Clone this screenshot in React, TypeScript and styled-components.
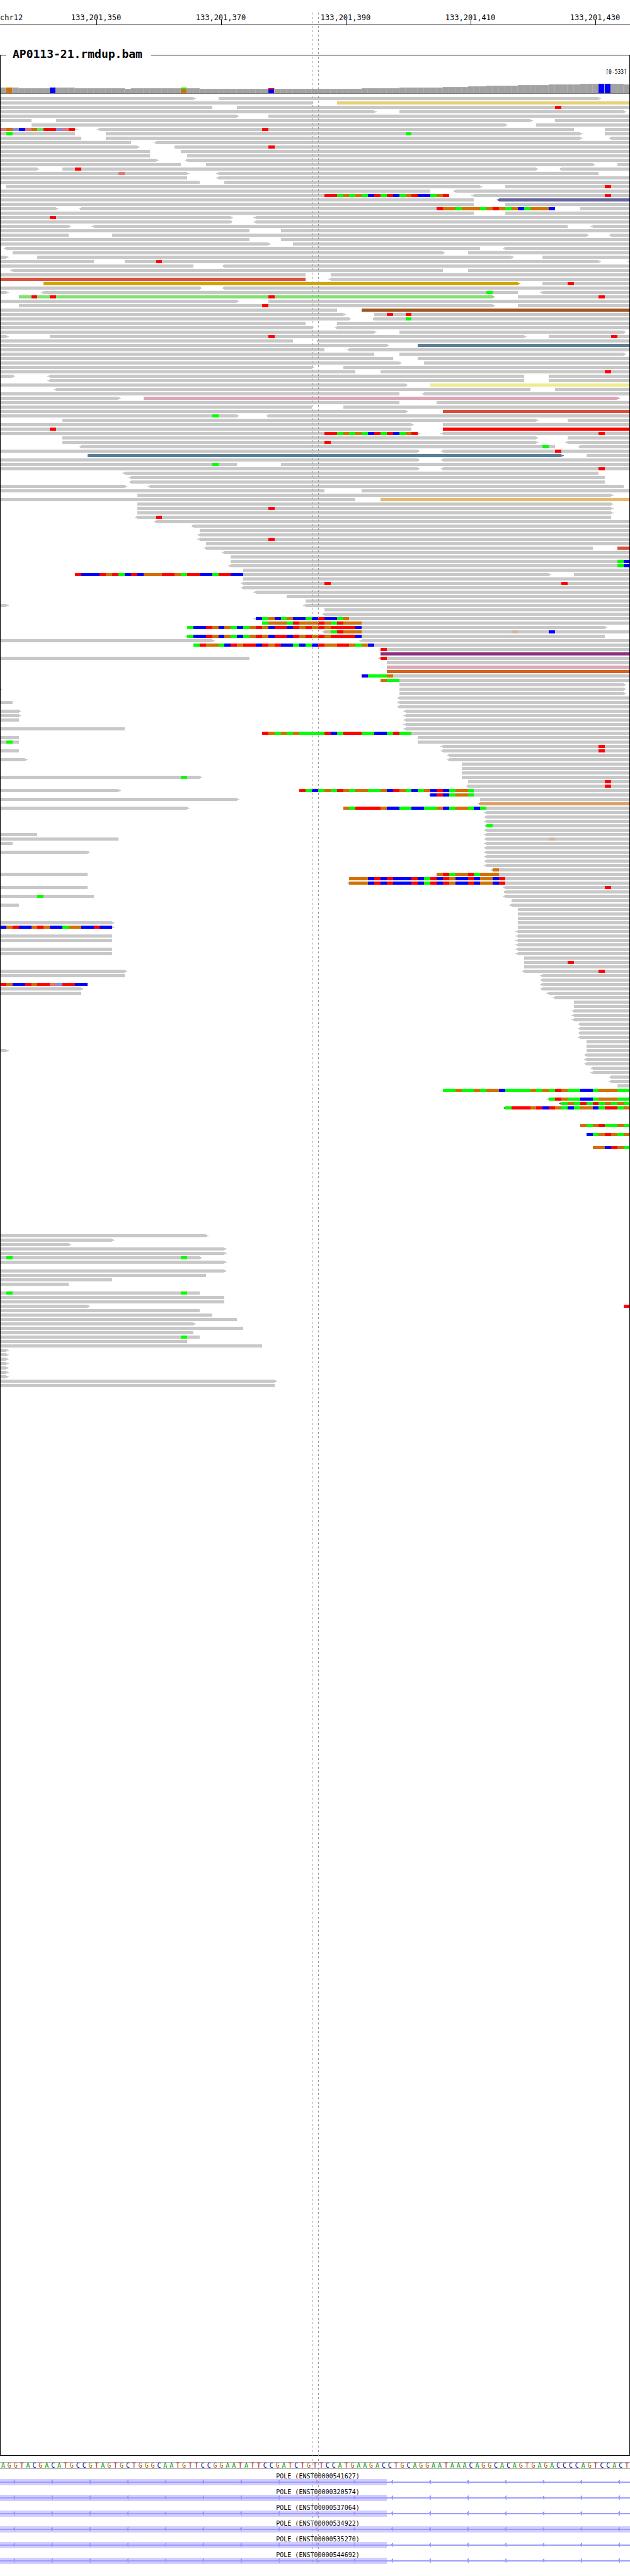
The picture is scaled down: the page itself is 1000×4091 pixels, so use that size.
import React from "react";
import styled, { createGlobalStyle, css } from "styled-components";

const BASES = 101;

const READ_COLORS: Record<string, string> = {
  y: "#e8d078",
  v: "#6464a0",
  r: "#d9503a",
  o: "#d2a500",
  g: "#82e070",
  b: "#a05523",
  s: "#5a8098",
  l: "#f0eb8c",
  p: "#daa5b5",
  R: "#ff0000",
  w: "#e6b96e",
  m: "#8c2d7d",
  n: "#d2641e",
  t: "#dca064",
  e: "#7d9b5a",
};

// Upper case: good base quality. Lower case: poor base quality, drawn pale.
const BASE_COLORS: Record<string, string> = {
  A: "#00ff00",
  C: "#0000ff",
  G: "#d17105",
  T: "#ff0000",
  a: "#64e664",
  c: "#8c8cdc",
  g: "#c9b7a0",
  t: "#e07878",
};

const LETTER_COLORS: Record<string, string> = {
  A: "#009600",
  C: "#000096",
  G: "#aa5f05",
  T: "#aa0000",
};

// One line for each pileup row. "<a-b>:c" is a read over bases a to b with its
// strand arrow and tint; "@k=ACGT" are bases that differ from the reference.
const PILEUP = `
0-31> 35-96>
0-50> 54-101:y
0-34 38-101 @89=T
0-60> 64-100>
0-38> 43-101
0-5 9-85> 89-101
0-0> 5-81> 86-101
0-12> @0=tGcCtGaTTctT <16-92 @42=T 97-101
0-12 @1=A 17-93> @65=A 97-101
0-13 17-93> <98-101
0-21 <25-101
0-22> 28-101 @43=T
0-24 29-101
0-24 30-101
0-25> <30-101
0-29 33-95> 99-101
0-6> 10-86> @12=T <90-101
0-30> @19=t <35-96
0-30 <35-101
0-32 36-101
1-77> 81-101 @97=T
0-69 <73-101
0-72 @52=TTAGAGACTATCAGTCCAGT <76-101 @97=T
0-76 <80-101:v
0-76 81-101
0-9> <13-89 @70=TGGAGGGAGTGAGCAGGGC 93-101
0-76 81-101
0-37> @8=T <41-101
0-37> <41-101
0-11> <15-91 <95-101
0-40 45-101
0-11 18-94> <98-101
0-40 45-101
0-43> 47-101
<1-77 <81-101
2-71> 75-101
0-1> 6-82> 87-101
0-15 20-96> @25=T <101-101
0-31 <36-101
<2-71 75-101
0-49 53-101
0-49:r <53-101
7-83>:o 87-101 @91=T
0-32> <36-101
0-1> <7-83 @78=A <87-101
3-79>:g @5=T @8=T @43=T 83-101 @96=T
0-38> 43-101
3-79> @42=T 83-101
0-54 58-101:b
0-55> 60-101 @62=T @65=T
0-56> <60-101 @65=A
0-49 54-101
0-50> <54-101
0-60> 64-100>
0-1> 8-84> @43=T 88-101 @98=T
0-47 <51-101
0-62> 67-101:s
0-52 <56-101
0-60 64-100>
0-63 67-101
0-64> 68-101
0-50> 55-101
0-57 61-101 @97=T
0-2> <8-84 88-101
<8-84 88-101
0-65> 69-101:l
<9-85 89-101
0-64 <68-101
0-19> 23-99>:p
0-64 70-101
0-50 55-101
0-65> 71-101:r
0-38> @34=A <43-101
10-86> 91-101
0-66> 71-101
0-66 @8=T 71-101:R
0-67> @52=TTAGAGACTATCAGT <71-101 @96=T
10-86> 91-101
10-86> @52=T <91-101
<13-89 @87=A <93-101
0-67> <71-101 @89=T
14-90>:s 94-101
0-67> <71-101
0-38 @34=A 45-101
0-67> <71-101 @96=T
<20-96
<21-97
<21-97
0-20> <24-100
0-52 58-101
22-98>
0-57 61-101:w
22-98>
22-98> @43=T
22-98>
<22-98 @25=T
<25-101
<31-101
32-101
<32-101
<32-101 @43=T
33-101
<33-95 99-101:r
<36-101
37-101
37-101 @99=AC
<37-101 @99=AC
39-101
12-88> @12=TCCCTGTACTCGGGTTGATTCCATTCC 92-101
39-101
<39-101 @52=T @90=T
<39-101
<41-101
46-101
49-101
0-1> <49-101
52-101
<52-101
<41-101 @41=CAGCAGCCACTCCAG
42-101 @42=AGGGATGGGTGATGGG
30-97> @30=ACCTGCGACAGTGCTTCTGTGTGTTTTC
<52-101 @52=gATGGG @82=g @88=C
<30-97 @30=ACCTGCGACAGTGCTTCTGTGTGTTTTC
0-34> <58-101
31-101 @31=ATGGACTGTTCTGTCCACACTGGTTGAGC
61-101 @61=T
61-101:m
0-40 <61-101 @61=T
62-101
62-101:p
62-101:n
58-101 @58=CAAAG
61-101 @61=GAA
64-100>
0-0> 64-100>
64-100>
<64-101
0-2 <64-101
<64-101
0-3> <65-101
0-3> <65-101
0-3 <65-101
<65-101
0-20 <65-101
42-101 @42=TGAGAGAAAATCATTTAACCATAA
0-3 67-101
0-3 @1=A 67-101
<71-101 @96=T
0-3 <71-101 @96=T
<72-101
0-4> <72-101
74-101
74-101
74-101
0-32> @29=A 74-101
75-101 @97=T
<75-101 @97=T
0-19> 48-101 @48=TACAGATGAGGAAGCTGACAGCTCAGGA
<69-101 @69=CTCAGGA
0-38> 77-101
<77-101:t
0-30> 55-101 @55=GATTTTGCCAACCAAGCAGGACA
<78-101
<78-101
<78-101
<78-101 @78=A
<78-101
0-6 <78-101
0-19 <78-101 @88=g
0-2 <78-101
<78-101
0-14> <78-101
<78-101
<78-101
<78-101
<79-101 @79=G
0-14 70-101 @70=GTAGGTAGGG
56-101 @56=GGGCTCTCCCTCATCTGCCTCGGCT
<56-101 @56=GGGCTCTCCCTCATCTGCCTCGGCT
0-14 <81-101 @97=T
<81-101
0-15 @6=A <81-101
82-101
0-3 <82-101
83-101
83-101
83-101
0-18> 83-101
0-18> @0=CGTCCGTGCCAGGCCTCC 83-101
<83-101
0-18 <83-101
0-18 <83-101
<83-101
0-18 <83-101
0-18 <83-101
84-101
84-101 @91=T
84-101
0-20> <84-101 @96=T
0-20 <87-101
<87-101
0-14 @0=TGCCTGTTtcTTCC <87-101
0-13> <87-101
0-13 <88-101
<89-101
92-101
92-101
<92-101
<92-101
<92-101
<93-101
<93-101
<93-101
<93-101
94-101
94-101
0-1> 94-101
<94-101
<94-101
<94-101
<95-101
<95-101
<98-101
<98-101
99-101
71-101 @71=AAGAAGAGGCAAAAGAGATGAACCAGGGAA
.
<88-101 @88=ATGAACCAGGGAA
<90-101:v @90=AGATATAGAGA
<81-101:e @81=ATTTGTCTGACAGGCATTAG
.
.
.
93-101 @93=GAGTAAGA
.
94-101 @94=CAGTGAG
.
.
95-101 @95=GGCTGA
.
.
.
.
.
.
.
.
.
.
.
.
.
.
.
.
.
.
.
0-33>
0-18>
0-11>
0-36>
0-36>
0-32> @1=A @29=A
0-36>
.
0-36>
0-33
0-18
0-11
.
0-32 @1=A @29=A
0-36
0-36
0-14> 100-101 @100=T
0-32
0-34
0-38
0-31>
0-39
0-31
0-32 @29=A
0-30
0-42
0-1>
0-1>
0-1>
0-1>
0-1>
0-1>
0-1>
0-44>
0-44
`;

type Read = { start: number; end: number; left: boolean; right: boolean; color: string };
type Run = { start: number; end: number; color: string };
type PileupRow = { reads: Read[]; runs: Run[] };

function parseRow(line: string): PileupRow {
  const reads: Read[] = [];
  const runs: Run[] = [];
  for (const token of line.split(" ")) {
    const read = /^(<?)(\d+)-(\d+)(>?)(?::(\w))?$/.exec(token);
    if (read) {
      reads.push({
        left: read[1] === "<",
        start: Number(read[2]),
        end: Number(read[3]),
        right: read[4] === ">",
        color: read[5] ? READ_COLORS[read[5]] : "#c8c8c8",
      });
      continue;
    }
    const diff = /^@(\d+)=(\w+)$/.exec(token);
    if (diff) {
      const first = Number(diff[1]);
      diff[2].split("").forEach((base, i) => {
        const color = BASE_COLORS[base];
        const last = runs[runs.length - 1];
        if (i > 0 && last.color === color) last.end += 1;
        else runs.push({ start: first + i, end: first + i + 1, color });
      });
    }
  }
  return { reads, runs };
}

const ROWS = PILEUP.trim().split("\n").map(parseRow);

// [number of bases, depth]
const DEPTH_STEPS: [number, number][] = [
  [3, 9], [6, 8], [3, 9], [8, 8], [1, 7], [11, 8], [26, 7], [6, 8], [7, 9],
  [4, 10], [3, 11], [5, 12], [5, 13], [5, 14], [7, 15], [1, 14],
];
const DEPTHS = DEPTH_STEPS.flatMap(([count, depth]) => Array<number>(count).fill(depth));

type Variant = { parts: { base: string; height: number }[]; dot?: string };
const VARIANTS: Record<number, Variant> = {
  1: { parts: [{ base: "G", height: 9 }], dot: "A" },
  8: { parts: [{ base: "C", height: 9 }], dot: "T" },
  29: { parts: [{ base: "A", height: 2 }, { base: "G", height: 7 }] },
  43: { parts: [{ base: "T", height: 2 }, { base: "C", height: 6 }] },
  96: { parts: [{ base: "C", height: 15 }], dot: "T" },
  97: { parts: [{ base: "C", height: 15 }], dot: "T" },
};

const SEQUENCE =
  "AGGTACGACATGCCGTAGTGCTGGGCAATGTTCCGGAATATTCCGATCTG" +
  "TTCCATGAAGACCTGCAGGAATAAACAGGCACAGTGAGACCCCAGTCCACT";

const TICKS = [
  { base: 15, label: "133,201,350" },
  { base: 35, label: "133,201,370" },
  { base: 55, label: "133,201,390" },
  { base: 75, label: "133,201,410" },
  { base: 95, label: "133,201,430" },
];

const TRANSCRIPTS = [
  { id: "ENST00000541627", exonEnd: 62 },
  { id: "ENST00000320574", exonEnd: 62 },
  { id: "ENST00000537064", exonEnd: 62 },
  { id: "ENST00000534922", exonEnd: 101 },
  { id: "ENST00000535270", exonEnd: 62 },
  { id: "ENST00000544692", exonEnd: 62 },
];

const GlobalStyle = createGlobalStyle`
  body {
    margin: 0;
    background: #ffffff;
    color: #000000;
    font-family: "DejaVu Sans Mono", "Liberation Mono", monospace;
  }
`;

const baseGrid = css`
  display: grid;
  grid-template-columns: repeat(${BASES}, minmax(0, 1fr));
`;

const Page = styled.main`
  position: relative;
  overflow: hidden;
`;

const Ruler = styled.header`
  ${baseGrid}
  grid-template-rows: 18px;
  padding-top: 21px;
  border-bottom: 1px solid #000000;
  font-size: 12px;
  line-height: 14px;
  white-space: nowrap;
`;

const Chromosome = styled.span`
  grid-row: 1;
  grid-column: 1 / span 6;
`;

const Position = styled.span`
  grid-row: 1;
  display: flex;
  justify-content: center;
  padding-right: 2px;
`;

const Tick = styled.i`
  grid-row: 1;
  align-self: end;
  justify-self: center;
  width: 1px;
  height: 8px;
  background: #000000;
`;

const Sample = styled.fieldset`
  margin: 35px 0 0;
  padding: 0;
  min-width: 0;
  border: 1px solid #000000;
`;

const SampleName = styled.legend`
  margin-left: 9px;
  padding: 0 14px 2px 10px;
  font-size: 18px;
  font-weight: bold;
  line-height: 22px;
`;

const Clip = styled.div`
  overflow: hidden;
`;

const Tracks = styled.div`
  margin: 0 -1px;
`;

const DepthRange = styled.div`
  padding: 11px 5px 0 0;
  font-size: 8px;
  line-height: 10px;
  text-align: right;
`;

const Coverage = styled.div`
  ${baseGrid}
  align-items: end;
  height: 15px;
  margin-top: 13px;
  border-bottom: 1px solid #787878;
`;

const Depth = styled.div`
  box-sizing: border-box;
  border: solid #b0b0b0;
  border-width: 1px 1px 0 0;
  background: #a2a2a2;
`;

const VariantBar = styled.div<{ $dot?: string }>`
  display: flex;
  flex-direction: column;
  border-right: 1px solid #b0b0b0;
  background-color: #ffffff;

  &::before {
    content: ${(p) => (p.$dot ? '""' : "none")};
    align-self: center;
    width: 1px;
    height: 1px;
    margin-bottom: -1px;
    z-index: 1;
    background: ${(p) => p.$dot};
  }
`;

const VariantPart = styled.div<{ $color: string; $height: number }>`
  height: ${(p) => p.$height}px;
  background: ${(p) => p.$color};
`;

const Reads = styled.div`
  display: flex;
  flex-direction: column;
  gap: 2px;
  min-height: 3745px;
  padding-top: 5px;
  box-sizing: content-box;
`;

const Row = styled.div`
  ${baseGrid}
  grid-template-rows: 5px;
`;

const arrow = css`
  content: "";
  position: absolute;
  top: 0;
  width: 4px;
  height: 5px;
  background-repeat: no-repeat;
  background-image: linear-gradient(currentColor, currentColor), linear-gradient(currentColor, currentColor);
  background-size: 2px 3px, 2px 1px;
`;

const ReadBar = styled.div<{ $color: string; $left: boolean; $right: boolean; $empty: boolean }>`
  position: relative;
  grid-row: 1;
  width: ${(p) => (p.$empty ? "0" : "auto")};
  color: ${(p) => p.$color};
  background: currentColor;

  ${(p) =>
    p.$left &&
    css`
      &::before {
        ${arrow}
        right: 100%;
        background-position: 2px 1px, 0 2px;
      }
    `}
  ${(p) =>
    p.$right &&
    css`
      &::after {
        ${arrow}
        left: 100%;
        background-position: 0 1px, 2px 2px;
      }
    `}
`;

const Mismatch = styled.div<{ $color: string }>`
  grid-row: 1;
  z-index: 1;
  background: ${(p) => p.$color};
`;

const Sequence = styled.div`
  ${baseGrid}
  grid-template-rows: 9px;
  margin-top: 10px;
  border: solid #aaaaaa;
  border-width: 1px 0;
  font-size: 10px;
  line-height: 9px;
  text-align: center;
`;

const Letter = styled.span<{ $color: string }>`
  color: ${(p) => p.$color};
`;

const Genes = styled.section`
  display: flex;
  flex-direction: column;
  gap: 4px;
  padding-top: 5px;
`;

const GeneName = styled.div`
  padding: 2px 0 0 9px;
  height: 9px;
  font-size: 10px;
  line-height: 10px;
  text-align: center;
`;

const GeneBody = styled.div`
  ${baseGrid}
  grid-template-rows: 10px;
`;

const Exon = styled.div`
  grid-row: 1;
  background: #d2cdff;
`;

const Strand = styled.svg`
  grid-row: 1;
  grid-column: 1 / -1;
  display: block;
  width: 100%;
  height: 10px;
`;

const Guides = styled.div`
  ${baseGrid}
  position: absolute;
  inset: 20px 0 0;
  z-index: 2;
  pointer-events: none;
`;

const Guide = styled.i`
  width: 1px;
  background: repeating-linear-gradient(#969696 0 3px, transparent 3px 7px);
`;

const span = (start: number, end: number) => ({
  gridColumn: start === end ? `${Math.min(start, BASES - 1) + 1}` : `${start + 1} / ${end + 1}`,
});

function PileupLine({ row }: { row: PileupRow }) {
  return (
    <Row>
      {row.reads.map((r, i) => (
        <ReadBar
          key={i}
          $color={r.color}
          $left={r.left}
          $right={r.right}
          $empty={r.start === r.end}
          style={{ ...span(r.start, r.end), justifySelf: r.start >= BASES ? "end" : undefined }}
        />
      ))}
      {row.runs.map((r, i) => (
        <Mismatch key={i} $color={r.color} style={span(r.start, r.end)} />
      ))}
    </Row>
  );
}

function DepthBar({ base, depth }: { base: number; depth: number }) {
  const variant = VARIANTS[base];
  if (!variant) return <Depth style={{ height: depth }} />;
  return (
    <VariantBar $dot={variant.dot && BASE_COLORS[variant.dot]}>
      {variant.parts.map((p) => (
        <VariantPart key={p.base} $color={BASE_COLORS[p.base]} $height={p.height} />
      ))}
    </VariantBar>
  );
}

function Transcript({ id, exonEnd }: { id: string; exonEnd: number }) {
  const pattern = `strand-${id}`;
  return (
    <div>
      <GeneName>POLE ({id})</GeneName>
      <GeneBody>
        <Exon style={span(0, exonEnd)} />
        <Strand aria-hidden="true" shapeRendering="crispEdges">
          <defs>
            <pattern id={pattern} width="60" height="10" patternUnits="userSpaceOnUse">
              <path d="M0 4h60v2H0zM21 3h1v3h-1zM22 2h1v5h-1zM23 1h1v7h-1z" fill="#9f9bff" />
            </pattern>
          </defs>
          <rect width="100%" height="10" fill={`url(#${pattern})`} />
        </Strand>
      </GeneBody>
    </div>
  );
}

export default function App() {
  return (
    <>
      <GlobalStyle />
      <Page>
        <Ruler>
          <Chromosome>chr12</Chromosome>
          {TICKS.map((t) => (
            <React.Fragment key={t.base}>
              <Position style={span(t.base - 5, t.base + 6)}>{t.label}</Position>
              <Tick style={span(t.base, t.base + 1)} />
            </React.Fragment>
          ))}
        </Ruler>
        <Sample>
          <SampleName>AP0113-21.rmdup.bam</SampleName>
          <Clip>
            <Tracks>
              <DepthRange>[0-533]</DepthRange>
              <Coverage>
                {DEPTHS.map((depth, base) => (
                  <DepthBar key={base} base={base} depth={depth} />
                ))}
              </Coverage>
              <Reads>
                {ROWS.map((row, i) => (
                  <PileupLine key={i} row={row} />
                ))}
              </Reads>
            </Tracks>
          </Clip>
        </Sample>
        <Sequence>
          {SEQUENCE.split("").map((base, i) => (
            <Letter key={i} $color={LETTER_COLORS[base]}>
              {base}
            </Letter>
          ))}
        </Sequence>
        <Genes>
          {TRANSCRIPTS.map((t) => (
            <Transcript key={t.id} {...t} />
          ))}
        </Genes>
        <Guides aria-hidden="true">
          <Guide style={span(50, 51)} />
          <Guide style={span(51, 52)} />
        </Guides>
      </Page>
    </>
  );
}
